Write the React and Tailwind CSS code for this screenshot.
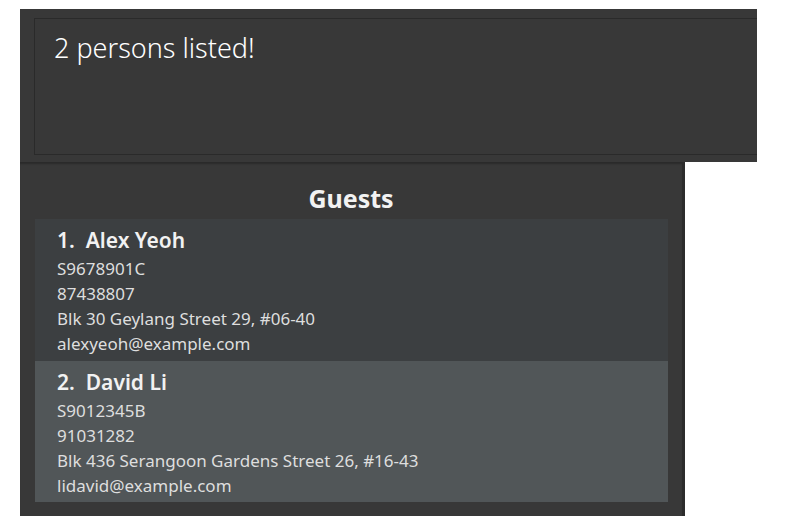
export default function App() {
  const persons = [
    {
      n: 1,
      name: "Alex Yeoh",
      id: "S9678901C",
      phone: "87438807",
      addr: "Blk 30 Geylang Street 29, #06-40",
      email: "alexyeoh@example.com",
      cls: "bg-[#3c3f41] h-[142px]",
    },
    {
      n: 2,
      name: "David Li",
      id: "S9012345B",
      phone: "91031282",
      addr: "Blk 436 Serangoon Gardens Street 26, #16-43",
      email: "lidavid@example.com",
      cls: "bg-[#515658] h-[141px]",
    },
  ];
  return (
    <div
      className="w-[796px] h-[516px] bg-white overflow-hidden"
      style={{ fontFamily: '"Noto Sans", "Open Sans", sans-serif' }}
    >
      <div className="h-[9px]" />
      <div className="ml-[20px] w-[737px] h-[153px] bg-[#383838] pt-[9px] pl-[14px]">
        <div className="h-[137px] border border-r-0 border-[#2a2a2a] pl-[19px] pt-[11px]">
          <div className="text-[27px] font-light text-white leading-[36px]">
            2 persons listed!
          </div>
        </div>
      </div>
      <div className="ml-[20px] w-[665px] h-[354px] bg-[#383838] border-r-[3px] border-[#2c2c2c] shadow-[inset_0_3px_2px_-1px_#2a2a2a]">
        <div className="h-[57px] pt-[16px] text-center">
          <span className="text-[25px] font-bold text-[#f2f2f2] leading-[41px]">Guests</span>
        </div>
        <div className="pl-[15px] pr-[14px]">
          {persons.map((p) => (
            <div key={p.n} className={`${p.cls} pl-[22px] pt-[6px] text-[#dedede]`}>
              <div className="text-[21px] font-semibold text-[#f2f2f2] leading-[31px]">
                {p.n}.&nbsp;&nbsp;{p.name}
              </div>
              <div className="text-[17px] leading-[25px]">{p.id}</div>
              <div className="text-[17px] leading-[25px]">{p.phone}</div>
              <div className="text-[17px] leading-[25px]">{p.addr}</div>
              <div className="text-[17px] leading-[25px]">{p.email}</div>
            </div>
          ))}
        </div>
      </div>
    </div>
  );
}
